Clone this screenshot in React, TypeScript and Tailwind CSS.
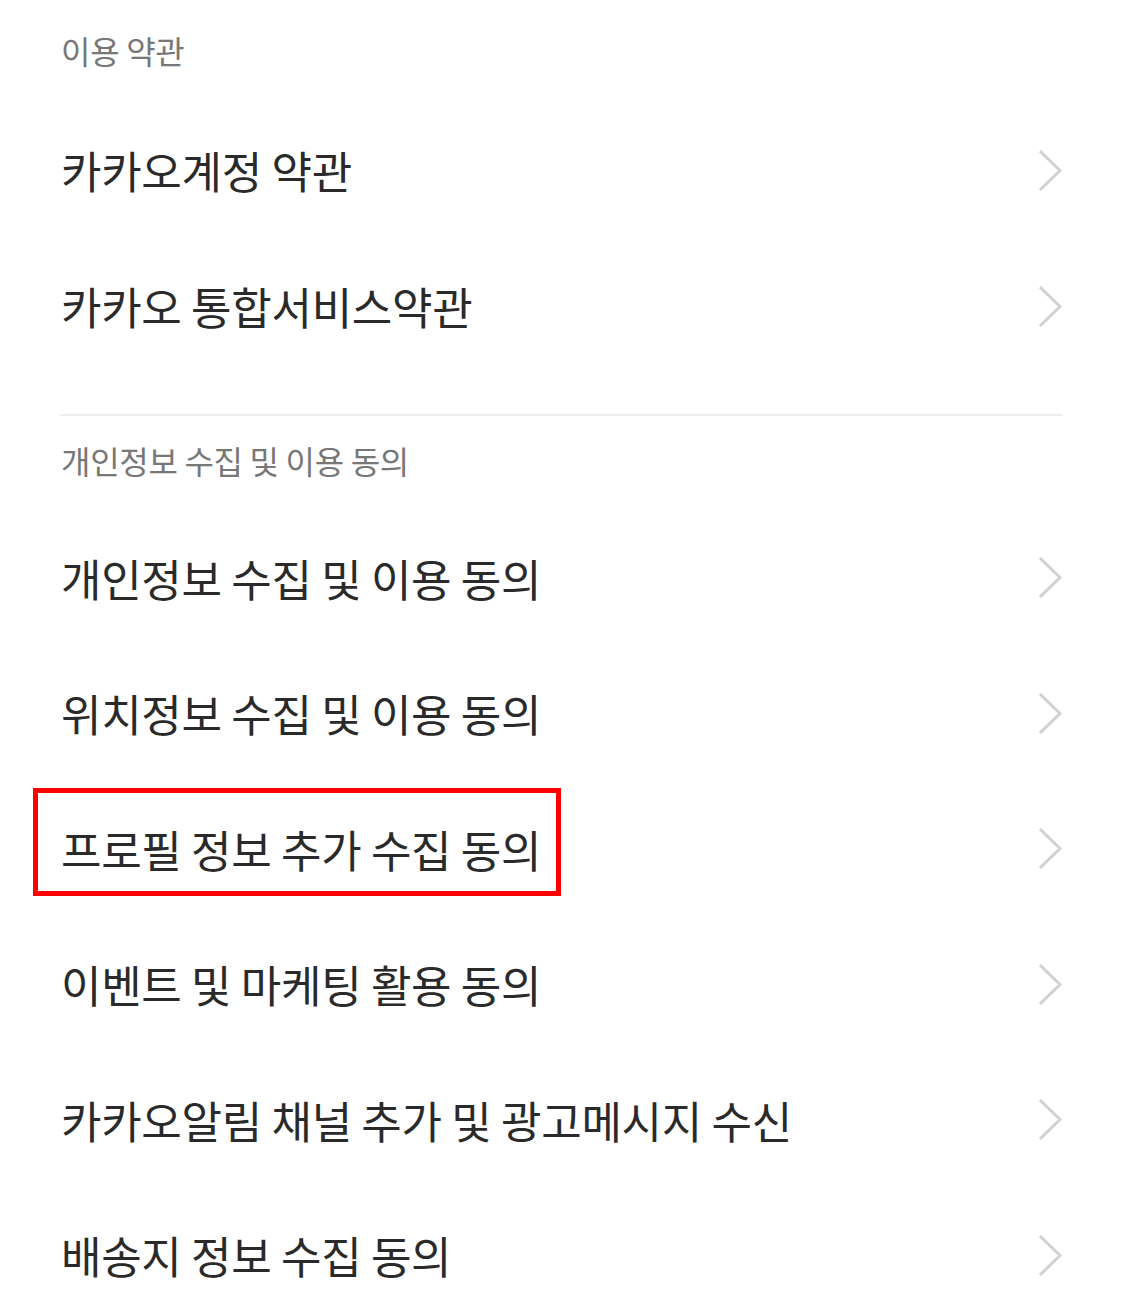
import React from "react";

type Section = {
  title: string;
  items: string[];
};

const SECTIONS: Section[] = [
  { title: "이용 약관", items: ["카카오계정 약관", "카카오 통합서비스약관"] },
  {
    title: "개인정보 수집 및 이용 동의",
    items: [
      "개인정보 수집 및 이용 동의",
      "위치정보 수집 및 이용 동의",
      "프로필 정보 추가 수집 동의",
      "이벤트 및 마케팅 활용 동의",
      "카카오알림 채널 추가 및 광고메시지 수신",
      "배송지 정보 수집 동의",
    ],
  },
];

const HIGHLIGHT = "프로필 정보 추가 수집 동의";

function Chevron() {
  return (
    <svg width="24" height="41" viewBox="0 0 24 41" fill="none" className="shrink-0">
      <polyline
        points="2,2 21,20.5 2,39"
        stroke="#d2d2d2"
        strokeWidth="3"
        strokeLinecap="square"
        strokeLinejoin="miter"
      />
    </svg>
  );
}

function Row({ label, height }: { label: string; height: string }) {
  const marked = label === HIGHLIGHT;
  return (
    <div className={`relative flex items-center justify-between ${height}`}>
      <span className="text-[44px] font-normal leading-none tracking-[-0.3px] text-[#2a2a2a]">{label}</span>
      <Chevron />
      {marked && (
        <div className="absolute left-[-28px] top-[7px] h-[108px] w-[528px] border-[5px] border-[#ff0000]" />
      )}
    </div>
  );
}

export default function App() {
  const [first, second] = SECTIONS;
  return (
    <div
      className="w-[1125px] h-[1298px] overflow-hidden bg-white pl-[61px] pr-[62px]"
      style={{ fontFamily: '"Noto Sans CJK KR", "Noto Sans", sans-serif' }}
    >
      {/* 이용 약관 */}
      <div className="flex h-[102px] items-center pb-[2px]">
        <span className="text-[32px] font-normal leading-none tracking-[-0.3px] text-[#777777]">{first.title}</span>
      </div>
      {first.items.map((item) => (
        <Row key={item} label={item} height="h-[136px]" />
      ))}

      <div className="mt-[40px] ml-[-1px] h-[2px] bg-[#eeeeee]" />

      {/* 개인정보 */}
      <div className="flex h-[94px] items-center pb-[6px]">
        <span className="text-[32px] font-normal leading-none tracking-[-0.3px] text-[#777777]">{second.title}</span>
      </div>
      {second.items.map((item) => (
        <Row key={item} label={item} height="h-[135.5px]" />
      ))}
    </div>
  );
}
